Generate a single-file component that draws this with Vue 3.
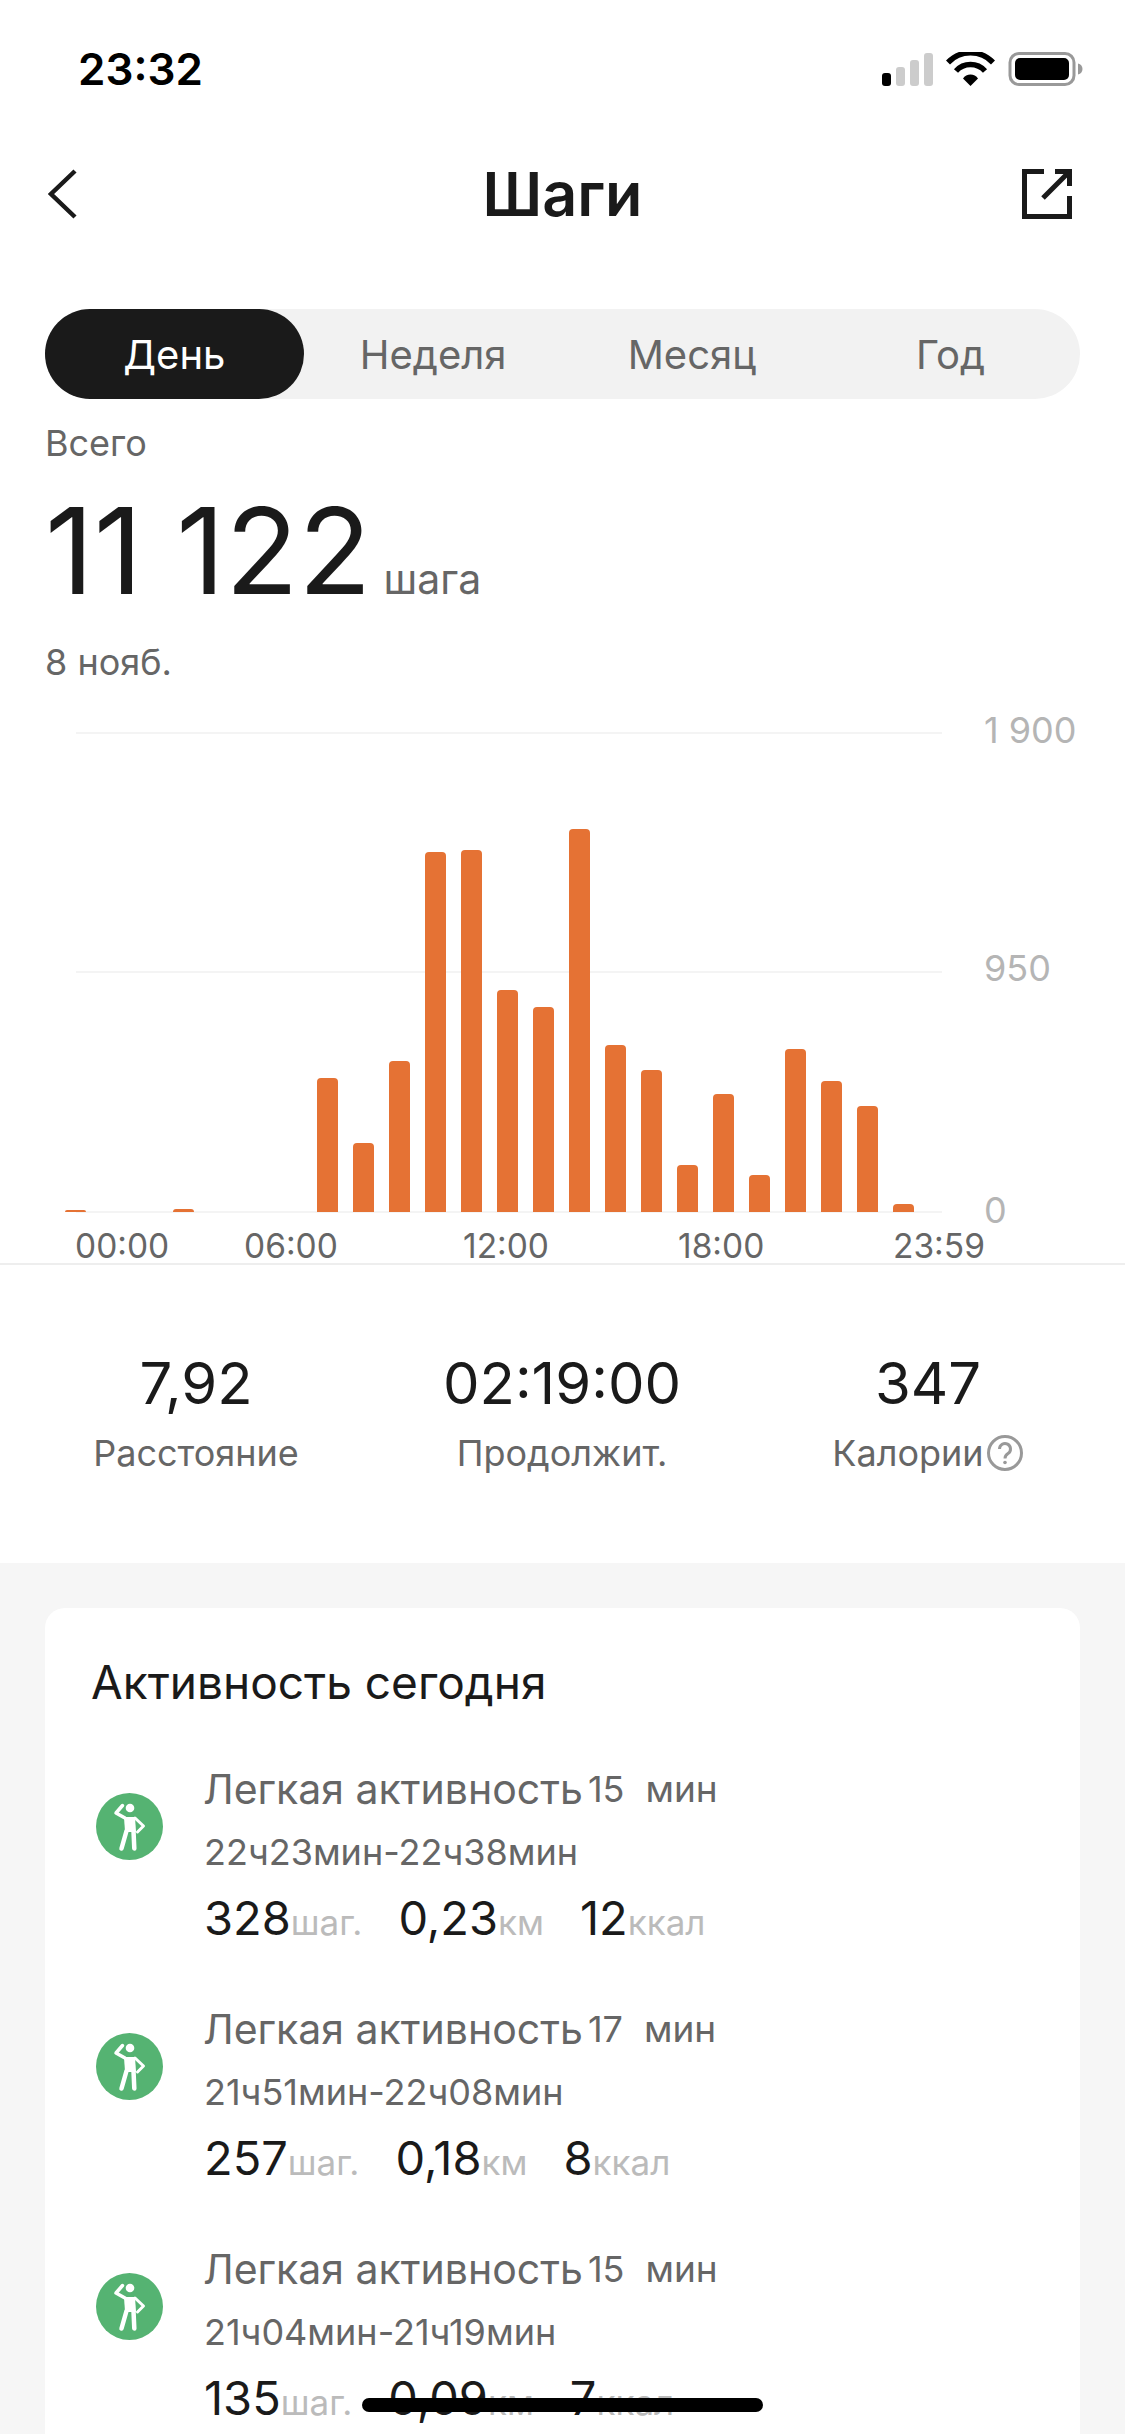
<template>
  <div class="page">
    <!-- status bar -->
    <div class="status">
      <span class="time">23:32</span>
      <svg class="status-icons" width="201" height="34" viewBox="0 0 201 34">
        <rect x="0" y="21" width="9" height="13" rx="3" fill="#000" />
        <rect x="14" y="15" width="9" height="19" rx="3" fill="#ccc" />
        <rect x="28" y="8" width="9" height="26" rx="3" fill="#ccc" />
        <rect x="42" y="1" width="9" height="33" rx="3" fill="#ccc" />
        <path d="M66 10.500a31 31 0 0 1 45 0" fill="none" stroke="#000" stroke-width="5.500" />
        <path d="M74 19a19.500 19.500 0 0 1 29 0" fill="none" stroke="#000" stroke-width="5.500" />
        <path d="M81 26.500a9 9 0 0 1 15 0l-7.500 7.500z" fill="#000" />
        <rect x="128" y="1.500" width="64" height="31" rx="9" fill="none" stroke="#999" stroke-width="3" />
        <rect x="133" y="6" width="54" height="22" rx="5" fill="#000" />
        <path d="M196 11.500c3 .8 4.500 3 4.500 5.500s-1.500 4.700-4.500 5.500z" fill="#999" />
      </svg>
    </div>

    <!-- nav -->
    <div class="nav">
      <svg class="back" width="30" height="50" viewBox="0 0 30 50">
        <path d="M27 2 3 25l24 23" fill="none" stroke="#1a1a1a" stroke-width="4.500" />
      </svg>
      <h1 class="title">Шаги</h1>
      <svg class="share" width="50" height="50" viewBox="0 0 50 50">
        <path d="M22 2.500H2.500v45h45V27M33 2.500h14.500V17M47 3 21 29" fill="none" stroke="#1a1a1a" stroke-width="5" />
      </svg>
    </div>

    <!-- period tabs -->
    <div class="tabs">
      <div v-for="(t, i) in tabs" :key="t" class="tab" :class="{ active: i === 0 }">{{ t }}</div>
    </div>

    <div class="summary">
      <div class="muted">Всего</div>
      <div class="total"><span class="total-num">11 122</span><span class="total-unit">шага</span></div>
      <div class="muted">8 нояб.</div>
    </div>

    <!-- chart -->
    <div class="chart">
      <div class="plot">
        <div class="gridline" style="top: 0"></div>
        <div class="gridline" style="top: 239px"></div>
        <div class="gridline" style="top: 479px"></div>
        <span class="y-label" style="top: -24px">1 900</span>
        <span class="y-label" style="top: 214px">950</span>
        <span class="y-label" style="top: 456px">0</span>
        <div class="bars">
          <div v-for="(h, i) in bars" :key="i" class="bar-col">
            <div v-if="h" class="bar" :style="{ height: h + 'px' }"></div>
          </div>
        </div>
      </div>
      <div class="x-axis">
        <span v-for="l in xLabels" :key="l">{{ l }}</span>
      </div>
    </div>

    <!-- stats -->
    <div class="stats">
      <div class="stat">
        <div class="stat-value">7,92</div>
        <div class="stat-label">Расстояние</div>
      </div>
      <div class="stat">
        <div class="stat-value">02:19:00</div>
        <div class="stat-label">Продолжит.</div>
      </div>
      <div class="stat">
        <div class="stat-value">347</div>
        <div class="stat-label">
          Калории
          <svg width="38" height="38" viewBox="0 0 38 38">
            <circle cx="19" cy="19" r="16.500" fill="none" stroke="#999" stroke-width="3" />
            <path d="M13.500 15a5.500 5.500 0 1 1 8.500 4.600c-2 1.300-3 2.400-3 4.900" fill="none" stroke="#999" stroke-width="3" />
            <circle cx="19" cy="28.500" r="1.800" fill="#999" />
          </svg>
        </div>
      </div>
    </div>

    <!-- activity list -->
    <div class="lower">
      <div class="card">
        <div class="card-title">Активность сегодня</div>
        <div v-for="a in activities" :key="a.range" class="row">
          <svg class="row-icon" width="67" height="67" viewBox="0 0 67 67">
            <circle cx="33.500" cy="33.500" r="33.500" fill="#55b372" />
            <circle cx="34" cy="15" r="4.300" fill="#fff" />
            <path d="M29 25l-9-5 6.500-7.500" fill="none" stroke="#fff" stroke-width="3.500" stroke-linejoin="round" stroke-linecap="round" />
            <path d="M39 25l8.500 8-6 6" fill="none" stroke="#fff" stroke-width="3" stroke-linejoin="round" stroke-linecap="round" />
            <path d="M28 24h11l1 15H29z" fill="#fff" />
            <path d="M30.500 38l-5 17.500M37.500 38l.8 17.500" fill="none" stroke="#fff" stroke-width="4.500" stroke-linecap="round" />
          </svg>
          <div class="row-text">
            <div class="row-head">
              <span>Легкая активность</span>
              <span class="row-mins">{{ a.mins }}</span>
              <span class="row-min-unit">мин</span>
            </div>
            <div class="row-range">{{ a.range }}</div>
            <div class="row-figures">
              <span class="figure"><b>{{ a.steps }}</b><i>шаг.</i></span>
              <span class="figure"><b>{{ a.km }}</b><i>км</i></span>
              <span class="figure"><b>{{ a.kcal }}</b><i>ккал</i></span>
            </div>
          </div>
        </div>
      </div>
    </div>

    <div class="home-bar"></div>
  </div>
</template>

<script setup>
const tabs = ['День', 'Неделя', 'Месяц', 'Год']

// высота столбцов по часам
const bars = [2, 0, 0, 3, 0, 0, 0, 134, 69, 151, 360, 362, 222, 205, 383, 167, 142, 47, 118, 37, 163, 131, 106, 8]

const xLabels = ['00:00', '06:00', '12:00', '18:00', '23:59']

const activities = [
  { mins: 15, range: '22ч23мин-22ч38мин', steps: 328, km: '0,23', kcal: 12 },
  { mins: 17, range: '21ч51мин-22ч08мин', steps: 257, km: '0,18', kcal: 8 },
  { mins: 15, range: '21ч04мин-21ч19мин', steps: 135, km: '0,09', kcal: 7 }
]
</script>

<style>
html, body {
  margin: 0;
  background: #fff;
}
</style>

<style scoped>
.page {
  position: relative;
  width: 1125px;
  height: 2436px;
  overflow: hidden;
  background: #fff;
  font-family: Inter, "Liberation Sans", sans-serif;
  color: #1a1a1a;
}

.status {
  height: 130px;
  box-sizing: border-box;
  padding: 52px 42px 0 78px;
  display: flex;
  justify-content: space-between;
  align-items: flex-start;
}
.time {
  font-size: 44px;
  font-weight: 600;
  line-height: 34px;
  color: #000;
}

.nav {
  height: 128px;
  padding: 0 48px;
  display: grid;
  grid-template-columns: 1fr auto 1fr;
  align-items: center;
}
.share {
  justify-self: end;
  margin-right: 5px;
}
.title {
  margin: 0;
  font-size: 61px;
  font-weight: 600;
  line-height: 70px;
}

.tabs {
  margin: 51px 45px 0;
  height: 90px;
  border-radius: 45px;
  background: #f2f2f2;
  display: grid;
  grid-template-columns: repeat(4, 1fr);
}
.tab {
  display: flex;
  align-items: center;
  justify-content: center;
  font-size: 40px;
  color: #666;
}
.tab.active {
  background: #1a1a1a;
  color: #fff;
  border-radius: 45px;
}

.summary {
  padding: 22px 45px 0;
}
.muted {
  font-size: 36px;
  line-height: 44px;
  color: #666;
}
.total {
  margin: 26px 0 29px;
  height: 120px;
  display: flex;
  align-items: baseline;
}
.total-num {
  font-size: 120px;
  line-height: 120px;
}
.total-unit {
  margin-left: 12px;
  font-size: 41px;
  color: #666;
}

.chart {
  height: 581px;
  box-sizing: border-box;
  padding-top: 48px;
  border-bottom: 2px solid #eee;
}
.plot {
  position: relative;
  height: 480px;
}
.gridline {
  position: absolute;
  left: 76px;
  width: 866px;
  height: 2px;
  background: #f4f4f4;
}
.y-label {
  position: absolute;
  left: 984px;
  font-size: 36px;
  line-height: 44px;
  color: #b5b5b5;
}
.bars {
  position: absolute;
  left: 57px;
  bottom: 0;
  height: 100%;
  display: flex;
  align-items: flex-end;
}
.bar-col {
  width: 36px;
  display: flex;
  justify-content: center;
}
.bar {
  width: 21px;
  background: #e57234;
  border-radius: 4px 4px 0 0;
}
.x-axis {
  margin: 14px 0 0 75px;
  display: grid;
  grid-template-columns: 169px 219px 215px 215px auto;
  font-size: 33.500px;
  line-height: 40px;
  color: #666;
}

.stats {
  height: 298px;
  box-sizing: border-box;
  padding: 83px 14px 0 13px;
  display: grid;
  grid-template-columns: repeat(3, 366px);
}
.stat {
  text-align: center;
}
.stat-value {
  font-size: 58px;
  line-height: 70px;
}
.stat-label {
  margin-top: 13px;
  font-size: 36px;
  line-height: 44px;
  color: #666;
  display: flex;
  align-items: center;
  justify-content: center;
  gap: 2px;
}

.lower {
  height: 871px;
  box-sizing: border-box;
  padding: 45px 45px 0;
  background: #f6f6f6;
}
.card {
  height: 900px;
  box-sizing: border-box;
  padding: 46px 46px 0;
  background: #fff;
  border-radius: 20px;
}
.card-title {
  font-size: 46px;
  line-height: 56px;
  margin-bottom: 55px;
}
.row {
  height: 240px;
  display: flex;
  align-items: flex-start;
}
.row-icon {
  flex: none;
  margin: 28px 40px 0 5px;
}
.row-head {
  display: flex;
  align-items: center;
  font-size: 41px;
  line-height: 48px;
  color: #666;
}
.row-mins {
  margin-left: 5px;
  font-size: 36px;
}
.row-min-unit {
  margin-left: 21px;
  font-size: 37px;
}
.row-range {
  margin-top: 15px;
  margin-left: 1px;
  font-size: 36px;
  line-height: 48px;
  color: #666;
}
.row-figures {
  margin-top: 14px;
  margin-left: 1px;
  display: flex;
  gap: 36px;
  line-height: 56px;
}
.figure b {
  font-weight: 400;
  font-size: 47px;
  color: #1a1a1a;
}
.figure i {
  font-style: normal;
  font-size: 35px;
  color: #bbb;
}

.home-bar {
  position: absolute;
  left: 362px;
  top: 2398px;
  width: 401px;
  height: 14px;
  border-radius: 7px;
  background: #000;
}
</style>
